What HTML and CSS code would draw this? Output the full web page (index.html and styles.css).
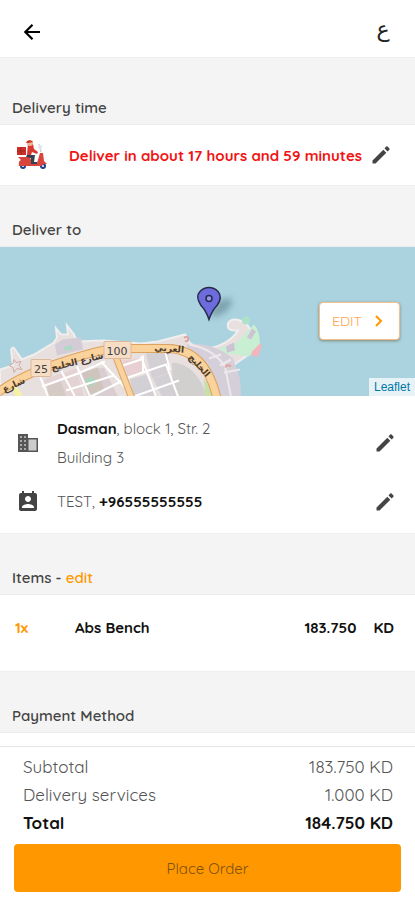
FILE: index.html
```html
<!DOCTYPE html>
<html lang="en">

<head>
    <meta charset="UTF-8">
    <meta name="viewport" content="width=device-width, initial-scale=1.0">
    <title>Checkout</title>
    <link rel="stylesheet" href="styles.css">
</head>

<body>
    <!-- Shared icons -->
    <svg class="sprite" aria-hidden="true">
        <symbol id="icon-pencil" viewBox="0 0 24 24">
            <path d="M3.500 17.500V20.500h3L17.300 9.700l-3-3L3.500 17.500zM20.400 6.800c.39-.39.39-1.020 0-1.410l-1.800-1.800a.996.996 0 0 0-1.410 0l-1.700 1.800 3.200 3.200 1.700-1.800z"/>
        </symbol>
    </svg>

    <header class="header">
        <button class="icon-btn" aria-label="Back">
            <svg class="icon" viewBox="0 0 24 24"><path d="M20 12H6M12.500 4.800 5.300 12l7.200 7.200" fill="none" stroke="#000" stroke-width="2.200"/></svg>
        </button>
        <button class="icon-btn lang-btn" lang="ar">ع</button>
    </header>

    <main>
        <h2 class="section-title section-first">Delivery time</h2>
        <section class="time-row">
            <svg class="scooter" viewBox="0 0 30 30" aria-hidden="true">
                <rect x="0" y="7" width="9" height="8" fill="#c9322b"/>
                <path d="M4 7v8M0 11h8" stroke="#a3231f" stroke-width="1"/>
                <path d="M22 4l2 8" stroke="#cfd6dc" stroke-width="1.500"/>
                <circle cx="23" cy="7" r="2" fill="#dfe6ea"/>
                <circle cx="6" cy="26" r="3" fill="#23418c"/>
                <circle cx="6" cy="26" r="1" fill="#fff"/>
                <circle cx="26" cy="26" r="3" fill="#23418c"/>
                <circle cx="26" cy="26" r="1" fill="#fff"/>
                <path d="M1 17h12l2 6h5l3-10h3l1 8 3 3-3 0-3 2H2q-1-5 2-6z" fill="#d8453d"/>
                <path d="M11 3l5 1 1 5 4 3-1 2-5-2-1 3h-4z" fill="#d93a30"/>
                <path d="M10 15l8 0-1 7h3v2h-6l0-6-5-1z" fill="#37404f"/>
                <circle cx="13" cy="3" r="3" fill="#f0b494"/>
                <path d="M9 3q1-4 6-2l1 1-5 1z" fill="#c9322b"/>
            </svg>
            <p class="time-text">Deliver in about 17 hours and 59 minutes</p>
            <button class="icon-btn" aria-label="Edit delivery time"><svg class="icon"><use href="#icon-pencil"/></svg></button>
        </section>

        <h2 class="section-title">Deliver to</h2>
        <section class="map">
            <svg class="map-canvas" viewBox="0 0 415 150" preserveAspectRatio="xMidYMid slice">
                <rect width="415" height="150" fill="#aad3df"/>
                <!-- land -->
                <path d="M0 123l13-4-2-16q2-4 4 0l7 10 12-5 20-12 3-5-1-9 5 6h7l-1-9 7 9 3 7 26-1 38 3 17-2 27-7 5 9 12 6q26-3 36-19-12 1-10-7 3-6 12-3 12 4 13 21 0 12-10 17l-10 7q-5 7-3 15l5 12v10H0z" fill="#e8dfdf" stroke="#f1eeee" stroke-width="2"/>
                <path d="M55 98l8-5 18-2 2 12-26 6z" fill="#d3ccd6"/>
                <path d="M64 101l8-2 1 4-8 1z" fill="#aadbc4"/>
                <path d="M14 113l2 3 5-1-2 4 3 4-5-1-3 4-1-5-4-2 4-2z" fill="none" stroke="#d5aaa4"/>
                <!-- city blocks -->
                <path d="M44 133l32-11 8 28H50z" fill="#e3d3d5"/>
                <path d="M78 127l26-6 14 29H88z" fill="#dacdd1"/>
                <path d="M122 114l22-2 1 14-17 5z" fill="#e7cfd3"/>
                <path d="M130 133l16-5 12 22h-24zM146 107l22-1 2 20-18 6zM153 132l16-5 9 23h-16z" fill="#d2d0d4"/>
                <path d="M172 116q24 1 35 34h-34z" fill="#d2d0ce"/>
                <path d="M82 126l16-5 6 22-15 5z" fill="#d0c5bd"/>
                <path d="M85 134l7-4 4 6-6 4z" fill="#a5dac0"/>
                <path d="M47 140l14-5 5 15H49z" fill="#d5cac4"/>
                <!-- park on the cape -->
                <path d="M207 106l30-10 17-18q8 9 5 27l-11 5-17-3-13 2z" fill="#c8efd2"/>
                <circle cx="246" cy="74" r="4" fill="#aee1c9"/>
                <path d="M252 105l8-8 2 2-4 11-7-1z" fill="#f2b5bb"/>
                <path d="M252 82l4 3-5 8-4-2zM226 100l8-4 1 8-8 2z" fill="#ccc4d2"/>
                <path d="M187 98q25-3 46 14l7 20 1 18h-22q-7-30-32-47z" fill="#d5cfd9"/>
                <path d="M189 98q24 4 36 22l6 30M231 113l-11 6M240 123l-16 3M221 108l-12 4" fill="none" stroke="#eee8ec" stroke-width="2"/>
                <path d="M204 132q7 8 9 18h-8z" fill="#c8dfaa"/>
                <path d="M184 91q5-2 4 3l-3 1M225 121q3-4 6-1" fill="none" stroke="#dfa49e" stroke-width="2"/>
                <!-- side streets -->
                <path d="M40 130l8 20M61 124l14 26M77 120l13 30M101 115l24 26M42 140l36-13 27-12M66 144l48-15M120 120l24-8M128 131l38-13 12 32M141 110l15 40M143 109v18M134 150l45-16M165 104l5 20M91 150l32-16" fill="none" stroke="#fff" stroke-width="2"/>
                <path d="M13 140l7 10" stroke="#f6f2a5" stroke-width="6"/>
                <!-- main road -->
                <path d="M115 108l17 44" stroke="#dca25e" stroke-width="7"/>
                <path d="M115 108l17 44" stroke="#fad29b" stroke-width="5"/>
                <path d="M-2 146Q20 129 60 116t55-14h53q38 1 49 50" fill="none" stroke="#dca25e" stroke-width="9"/>
                <path d="M-2 146Q20 129 60 116t55-14h53q38 1 49 50" fill="none" stroke="#fad29b" stroke-width="7"/>
                <rect x="31" y="113" width="20" height="17" rx="1" fill="#f6ddc4" stroke="#deb89b"/>
                <rect x="104" y="95" width="27" height="17" rx="1" fill="#f6ddc4" stroke="#deb89b"/>
                <g class="road-name" text-anchor="middle">
                    <text transform="translate(78 118) rotate(-14)">شارع الخليج</text>
                    <text transform="translate(15 141) rotate(-25)">شارع</text>
                    <text transform="translate(169 105) rotate(5)">العربي</text>
                    <text transform="translate(197 121) rotate(48)">الخليج</text>
                </g>
                <g class="road-no" text-anchor="middle">
                    <text x="41" y="126">25</text>
                    <text x="117" y="108">100</text>
                </g>
                <!-- marker -->
                <ellipse class="pin-shadow" cx="221" cy="61" rx="13" ry="6" transform="rotate(-38 221 61)"/>
                <path d="M209 73q-3-9-8-14-6-9-1-14 4-4 9-4t9 4q5 6-1 14-5 5-8 14z" fill="#6c6cdd" stroke="#29294d" stroke-width="1.500"/>
                <circle cx="209" cy="52" r="3" fill="#8d9be8" stroke="#29294d" stroke-width="1.500"/>
            </svg>
            <button class="map-edit">EDIT
                <svg class="chevron" viewBox="0 0 10 12" aria-hidden="true"><path d="M3 1l5 5-5 5" fill="none" stroke="#ff9800" stroke-width="2"/></svg>
            </button>
            <a class="leaflet" href="#">Leaflet</a>
        </section>

        <section class="address">
            <div class="address-row">
                <svg class="icon" viewBox="0 0 24 24" aria-hidden="true">
                    <path d="M11 8h10v12H11z" fill="#ccc"/>
                    <path d="M3 4h8v16H3z" fill="#aaa"/>
                    <path d="M12 7V3H2v18h20V7H12zM6 19H4v-2h2v2zm0-4H4v-2h2v2zm0-4H4V9h2v2zm0-4H4V5h2v2zm4 12H8v-2h2v2zm0-4H8v-2h2v2zm0-4H8V9h2v2zm0-4H8V5h2v2zM20.500 19.500h-8v-11h8z" fill="#555" fill-rule="evenodd"/>
                </svg>
                <p class="address-text"><b>Dasman</b>, block 1, Str. 2<br>Building 3</p>
                <button class="icon-btn" aria-label="Edit address"><svg class="icon"><use href="#icon-pencil"/></svg></button>
            </div>
            <div class="address-row">
                <svg class="icon" viewBox="0 0 24 24" aria-hidden="true">
                    <path d="M19 3h-1V1h-2v2H8V1H6v2H5c-1.110 0-2 .9-2 2v14c0 1.100.89 2 2 2h14c1.100 0 2-.9 2-2V5c0-1.100-.9-2-2-2zm-7 3c1.660 0 3 1.340 3 3s-1.340 3-3 3-3-1.340-3-3 1.340-3 3-3zm6 12H6v-1c0-2 4-3.100 6-3.100s6 1.100 6 3.100v1z"/>
                </svg>
                <p class="address-text">TEST, <b>+96555555555</b></p>
                <button class="icon-btn" aria-label="Edit contact"><svg class="icon"><use href="#icon-pencil"/></svg></button>
            </div>
        </section>

        <h2 class="section-title">Items - <a href="#">edit</a></h2>
        <section class="item">
            <span class="item-qty">1x</span>
            <span class="item-name">Abs Bench</span>
            <span class="item-price">183.750</span>
            <span>KD</span>
        </section>

        <h2 class="section-title">Payment Method</h2>
    </main>

    <footer class="summary">
        <dl class="totals">
            <div><dt>Subtotal</dt><dd>183.750 KD</dd></div>
            <div><dt>Delivery services</dt><dd>1.000 KD</dd></div>
            <div class="total"><dt>Total</dt><dd>184.750 KD</dd></div>
        </dl>
        <button class="order-btn">Place Order</button>
    </footer>
</body>

</html>
```
FILE: styles.css
```css
* {
    margin: 0;
    padding: 0;
    box-sizing: border-box;
}

body {
    background-color: #fff;
    color: #111;
    font-family: Quicksand, Lato, sans-serif;
    font-size: 15px;
    min-height: 100vh;
    display: flex;
    flex-direction: column;
}

button {
    font-family: inherit;
    background: none;
    border: none;
    cursor: pointer;
}

a {
    color: #ff9800;
    text-decoration: none;
}

.sprite {
    display: none;
}

.icon {
    display: block;
    width: 24px;
    height: 24px;
    fill: #444;
    flex-shrink: 0;
}

.icon-btn {
    flex-shrink: 0;
}

/* Header */
.header {
    display: flex;
    justify-content: space-between;
    align-items: center;
    height: 57px;
    padding: 6px 20px 0;
}

.lang-btn {
    width: 24px;
    font-family: "DejaVu Sans", sans-serif;
    font-size: 22px;
    line-height: 20px;
    padding-bottom: 4px;
    color: #222;
}

/* Section headings */
.section-title {
    background-color: #f4f4f4;
    border-top: 1px solid #eee;
    border-bottom: 1px solid #ebeeed;
    padding: 34px 12px 6px;
    font-size: 15px;
    font-weight: 600;
    line-height: 20px;
    color: #444;
}

.section-first {
    padding-top: 40px;
}

/* Delivery time */
.time-row {
    display: flex;
    align-items: center;
    height: 60px;
    padding: 0 22px 0 17px;
}

.scooter {
    width: 30px;
    height: 30px;
    flex-shrink: 0;
}

.time-text {
    flex: 1;
    padding-left: 22px;
    font-weight: 700;
    color: #f01414;
}

/* Map */
.map {
    position: relative;
    height: 149px;
    overflow: hidden;
}

.map-canvas {
    display: block;
    width: 100%;
    height: 100%;
}

.road-name {
    font-family: "DejaVu Sans", sans-serif;
    font-size: 9px;
    font-weight: 700;
    fill: #4b3a2a;
}

.road-no {
    font-family: "DejaVu Sans", sans-serif;
    font-size: 11px;
    fill: #444;
}

.pin-shadow {
    fill: #50707c;
    opacity: 0.5;
    filter: blur(3px);
}

.map-edit {
    position: absolute;
    top: 55px;
    right: 15px;
    width: 81px;
    height: 38px;
    display: flex;
    align-items: center;
    justify-content: space-between;
    padding: 0 16px 0 12px;
    background-color: #fff;
    border: 1px solid #f3c08c;
    border-radius: 4px;
    box-shadow: 0 1px 3px rgba(90, 60, 20, 0.5);
    font-size: 14px;
    font-weight: 400;
    color: #ffa550;
}

.chevron {
    width: 10px;
    height: 12px;
}

.leaflet {
    position: absolute;
    right: 0;
    bottom: 0;
    padding: 0 5px;
    background-color: rgba(255, 255, 255, 0.7);
    font-family: "Liberation Sans", sans-serif;
    font-size: 12px;
    line-height: 18px;
    color: #0078a8;
}

/* Address */
.address {
    padding: 18px 18px 17px 16px;
}

.address-row {
    display: flex;
    align-items: center;
}

.address-text {
    flex: 1;
    padding-left: 17px;
    line-height: 29px;
    color: #555;
}

.address-row + .address-row {
    margin-top: 15px;
}

.address-text b {
    color: #111;
}

/* Items */
.item {
    display: flex;
    height: 76px;
    padding: 23px 21px 0 15px;
    font-weight: 700;
    line-height: 20px;
}

.item-qty {
    width: 60px;
    color: #ff9800;
}

.item-name {
    flex: 1;
}

.item-price {
    margin-right: 17px;
}

/* Order summary */
.summary {
    margin-top: auto;
    padding: 6px 14px 8px;
    border-top: 1px solid #e4e8e7;
    background-color: #fff;
}

.totals {
    padding: 0 8px 7px 9px;
    font-size: 17px;
    line-height: 28px;
    color: #555;
}

.totals div {
    display: flex;
    justify-content: space-between;
}

.totals .total {
    font-weight: 700;
    color: #111;
}

.order-btn {
    width: 100%;
    height: 48px;
    border-radius: 4px;
    background-color: #ff9800;
    font-size: 15px;
    color: #80500d;
}
```
